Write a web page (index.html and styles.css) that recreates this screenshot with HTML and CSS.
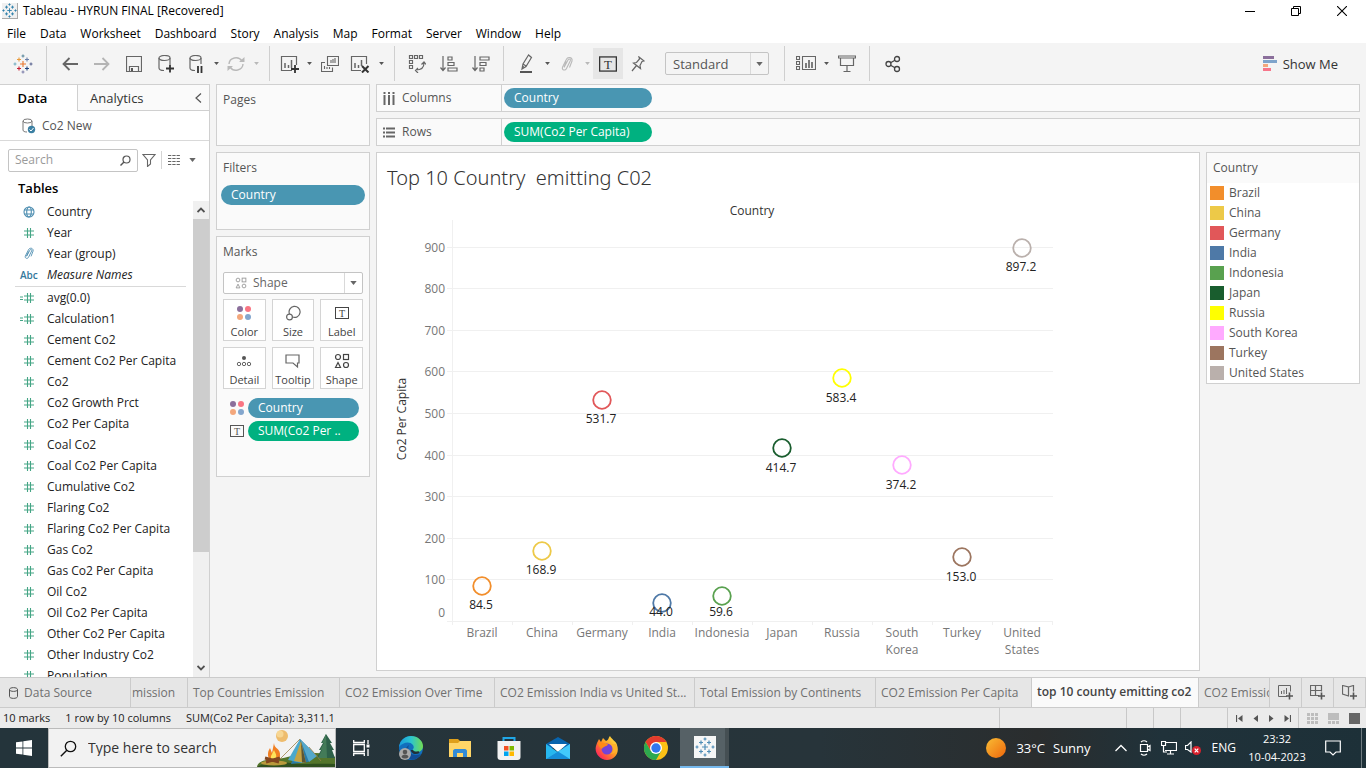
FILE: index.html
```html
<!DOCTYPE html>
<html lang="en">
<head>
<meta charset="utf-8">
<title>Tableau - HYRUN FINAL [Recovered]</title>
<link rel="stylesheet" href="styles.css">
</head>
<body>
<svg class="defs" aria-hidden="true">
  <symbol id="hash" viewBox="0 0 12 12"><path d="M1 4h10M1 8h10M4.500 1v10M7.500 1v10" fill="none" stroke="#45a585" stroke-width="1.100"/></symbol>
  <symbol id="calc" viewBox="0 0 16 12"><path d="M5 4h10M5 8h10M8.500 1v10M11.500 1v10M1 5h3M1 7.500h3" fill="none" stroke="#45a585" stroke-width="1.100"/></symbol>
  <symbol id="clip" viewBox="0 0 14 16"><path d="M4 11.500L8 4c1-1.800 3-.8 2.300.8L6.500 12.500c-1.400 2.700-5 1.500-4-1.400L6.300 3.500c1.500-3.300 6.500-2.300 5.700 1.500L9.500 11.500M6.500 5.500L4 11" fill="none" stroke="currentColor" stroke-width="1.100"/></symbol>
  <symbol id="down" viewBox="0 0 8 5"><path d="M0 0h8L4 5z" fill="currentColor"/></symbol>
  <symbol id="dots" viewBox="0 0 16 16"><circle cx="4" cy="4" r="3" fill="#8b6f9b"/><circle cx="12" cy="4" r="3" fill="#f97583"/><circle cx="4" cy="12" r="3" fill="#f3a77c"/><circle cx="12" cy="12" r="3" fill="#83a6cd"/></symbol>
  <symbol id="tbox" viewBox="0 0 14 14"><rect x=".5" y="1.500" width="13" height="11" fill="none" stroke="currentColor"/><text x="7" y="10.500" class="t-letter">T</text></symbol>
  <symbol id="shapes" viewBox="0 0 16 16"><g fill="none" stroke="currentColor" stroke-width="1.200"><circle cx="4" cy="4" r="2.500"/><rect x="9.500" y="1.500" width="5" height="5"/><path d="M1.500 14.500L4 9.500l2.500 5z"/><circle cx="12" cy="12" r="2.500"/></g></symbol>
  <symbol id="plusmarks" viewBox="0 0 20 20"><path d="M7 10h6M10 7v6M4 5.500h4M6 3.500v4M12 5.500h4M14 3.500v4M4 14.500h4M6 12.500v4M12 14.500h4M14 12.500v4M8.500 2h3M10 .5v3M8.500 18h3M10 16.500v3M.5 10h3M2 8.500v3M16.500 10h3M18 8.500v3" fill="none" stroke="currentColor" stroke-width="1.200"/></symbol>
</svg>

<header class="titlebar">
  <svg class="app-icon" width="16" height="16"><use href="#plusmarks"/></svg>
  <h1>Tableau - HYRUN FINAL [Recovered]</h1>
  <div class="window-buttons">
    <button aria-label="Minimize"><svg width="10" height="10" viewBox="0 0 10 10"><path d="M0 5.500h10" stroke="#000"/></svg></button>
    <button aria-label="Restore"><svg width="10" height="10" viewBox="0 0 10 10"><path d="M.5 2.500h7v7h-7zM2.500 2.500v-2h7v7h-2" fill="none" stroke="#000"/></svg></button>
    <button aria-label="Close"><svg width="10" height="10" viewBox="0 0 10 10"><path d="M0 0l10 10M10 0L0 10" stroke="#000" stroke-width="1.100"/></svg></button>
  </div>
</header>

<nav class="menubar">
  <button>File</button><button>Data</button><button>Worksheet</button><button>Dashboard</button><button>Story</button><button>Analysis</button><button>Map</button><button>Format</button><button>Server</button><button>Window</button><button>Help</button>
</nav>

<div class="toolbar">
  <button class="logo" aria-label="Start page"><svg width="20" height="20" viewBox="0 0 20 20"><g fill="none" stroke-width="1.100"><path d="M7 10h6M10 7v6" stroke="#e8762c"/><path d="M4 5.500h4M6 3.500v4" stroke="#e89b3c"/><path d="M12 5.500h4M14 3.500v4" stroke="#6a7fa8"/><path d="M4 14.500h4M6 12.500v4" stroke="#c72035"/><path d="M12 14.500h4M14 12.500v4" stroke="#1f447e"/><path d="M8.500 2h3M10 .5v3" stroke="#59879b"/><path d="M8.500 18h3M10 16.500v3" stroke="#7e7fab"/><path d="M.5 10h3M2 8.500v3" stroke="#73adc0"/><path d="M16.500 10h3M18 8.500v3" stroke="#5b6591"/></g></svg></button>
  <i class="sep"></i>
  <button class="b32" aria-label="Undo"><svg width="16" height="14" viewBox="0 0 16 14"><path d="M16 7H1.500M7.500 1l-6 6 6 6" fill="none" stroke="#666" stroke-width="1.800"/></svg></button>
  <button class="b32" aria-label="Redo"><svg width="16" height="14" viewBox="0 0 16 14"><path d="M0 7h14.500M8.500 1l6 6-6 6" fill="none" stroke="#b4b4b4" stroke-width="1.800"/></svg></button>
  <button class="b32" aria-label="Save"><svg width="16" height="16" viewBox="0 0 16 16"><path d="M.5.500h15v15H.5zM3.500 15.500v-5h9v5" fill="none" stroke="#666" stroke-width="1.200"/><path d="M5 12h2v3H5z" fill="#555"/></svg></button>
  <button class="b32" aria-label="New data source"><svg width="16" height="18" viewBox="0 0 16 18"><g fill="none" stroke="#666" stroke-width="1.200"><ellipse cx="6.500" cy="3" rx="5.500" ry="2.500"/><path d="M1 3v10c0 1.500 2 2.500 5 2.500M12 3v6"/></g><path d="M8 13.500h8M12 9.500v8" stroke="#333" stroke-width="1.800"/></svg></button>
  <button class="b28" aria-label="Pause auto updates"><svg width="14" height="18" viewBox="0 0 14 18"><g fill="none" stroke="#666" stroke-width="1.200"><ellipse cx="6.500" cy="3" rx="5.500" ry="2.500"/><path d="M1 3v10c0 1.500 2 2.500 5 2.500M12 3v6"/></g><path d="M9 11v7M12.500 11v7" stroke="#333" stroke-width="1.800"/></svg></button>
  <button class="caret" aria-label="Auto update options"><svg width="5" height="3"><use href="#down"/></svg></button>
  <button class="b28 off" aria-label="Run update"><svg width="18" height="16" viewBox="0 0 18 16"><g fill="none" stroke="currentColor" stroke-width="1.400"><path d="M2 8a7 6.500 0 0 1 13-3M16 8a7 6.500 0 0 1-13 3"/></g><path d="M12 6h5.500V1zM6 10H.5v5z" fill="currentColor"/></svg></button>
  <button class="caret off" aria-label="Run update options"><svg width="5" height="3"><use href="#down"/></svg></button>
  <i class="sep"></i>
  <button class="b26" aria-label="New worksheet"><svg width="20" height="18" viewBox="0 0 20 18"><path d="M12 15.500H1.500v-14h15V10" fill="none" stroke="#666" stroke-width="1.200"/><path d="M5 8v5M8.500 10v3M11.500 5v8" stroke="#666" stroke-width="1.500"/><path d="M11 14h8M15 10v8" stroke="#333" stroke-width="1.800"/></svg></button>
  <button class="caret" aria-label="New worksheet options"><svg width="5" height="3"><use href="#down"/></svg></button>
  <button class="b30" aria-label="Duplicate"><svg width="18" height="16" viewBox="0 0 18 16"><path d="M6.500.500h11v9h-11zM4 6.500H.5v9h11v-4M10 7V4M12 7V3M14 7V2M3.500 13v-3M6 13v-2M8.500 13v-2" fill="none" stroke="#666" stroke-width="1.100"/></svg></button>
  <button class="b30" aria-label="Clear sheet"><svg width="20" height="18" viewBox="0 0 20 18"><path d="M11 15.500H1.500v-14h15V9" fill="none" stroke="#666" stroke-width="1.200"/><path d="M5 8v5M8.500 10v3M11.500 5v6" stroke="#666" stroke-width="1.500"/><path d="M12 11l6.500 6.500M18.500 11L12 17.500" stroke="#333" stroke-width="2"/></svg></button>
  <button class="caret" aria-label="Clear options"><svg width="5" height="3"><use href="#down"/></svg></button>
  <i class="sep"></i>
  <button class="b30" aria-label="Swap rows and columns"><svg width="18" height="18" viewBox="0 0 18 18"><path d="M1.500.500h3v3h-3zM6.500.500h3v3h-3zM11.500.500h3v3h-3zM1.500 5.500h3v3h-3zM1.500 10.500h3v3h-3zM16 8c0 5-3 7-8 7M13.500 9.500L16 7l2 2.500M10 13l-2.500 2.500L10 18" fill="none" stroke="#666" stroke-width="1.200"/></svg></button>
  <button class="b34" aria-label="Sort ascending"><svg width="18" height="16" viewBox="0 0 18 16"><path d="M3 0v14M.5 11.500L3 14.500l2.500-3M8 1h4v3H8zM8 6.500h6v3H8zM8 12h9v3H8z" fill="none" stroke="#666" stroke-width="1.200"/></svg></button>
  <button class="b30" aria-label="Sort descending"><svg width="18" height="16" viewBox="0 0 18 16"><path d="M3 0v14M.5 11.500L3 14.500l2.500-3M8 1h9v3H8zM8 6.500h6v3H8zM8 12h4v3H8z" fill="none" stroke="#666" stroke-width="1.200"/></svg></button>
  <i class="sep"></i>
  <button class="b30" aria-label="Highlight"><svg width="14" height="20" viewBox="0 0 14 20"><path d="M9.500 1L4 10l-1 5 4-2.500 5.500-9zM4 10l3 2M3 15l1.500-3" fill="none" stroke="#666" stroke-width="1.200"/><path d="M1 18h12" stroke="#555" stroke-width="2"/></svg></button>
  <button class="caret" aria-label="Highlight options"><svg width="5" height="3"><use href="#down"/></svg></button>
  <button class="b28 off" aria-label="Group members"><svg width="14" height="18"><use href="#clip"/></svg></button>
  <button class="caret off" aria-label="Group options"><svg width="5" height="3"><use href="#down"/></svg></button>
  <button class="b30 pressed" aria-label="Show mark labels"><svg width="18" height="18"><use href="#tbox"/></svg></button>
  <button class="b30" aria-label="Fix axes"><svg width="14" height="16" viewBox="0 0 14 16"><path d="M8 1l5 4-2 .5-2 4 .5 3L2.500 7l3-.5L8.500 3zM5.500 9.500L1 15" fill="none" stroke="#666" stroke-width="1.200"/></svg></button>
  <div class="picker fit"><select aria-label="Fit"><option>Standard</option></select><span class="picker-arrow"><svg width="7" height="4"><use href="#down"/></svg></span></div>
  <i class="sep wide"></i>
  <button class="b28" aria-label="Show or hide cards"><svg width="20" height="15" viewBox="0 0 20 15"><path d="M.5.500h3v3h-3zM.5 5.500h3v3h-3zM.5 10.500h3v3h-3zM6.500.500h13v13h-13z" fill="none" stroke="#666" stroke-width="1.100"/><path d="M10 7v5M13 4v8M16 6v6" stroke="#555" stroke-width="1.500"/></svg></button>
  <button class="caret" aria-label="Card options"><svg width="5" height="3"><use href="#down"/></svg></button>
  <button class="b30" aria-label="Presentation mode"><svg width="18" height="18" viewBox="0 0 18 18"><path d="M.5 1h17v2H.5zM2.500 3.500v7h13v-7M9 11v5M5.500 16.500h7" fill="none" stroke="#666" stroke-width="1.200"/></svg></button>
  <i class="sep"></i>
  <button class="b32" aria-label="Share"><svg width="16" height="18" viewBox="0 0 16 18"><g fill="none" stroke="#444" stroke-width="1.300"><circle cx="3.500" cy="9" r="2.500"/><circle cx="12" cy="4" r="2.500"/><circle cx="12" cy="14" r="2.500"/><path d="M5.500 7.700L10 5.200M5.500 10.300L10 12.800"/></g></svg></button>
  <button class="showme"><svg width="14" height="15" viewBox="0 0 14 15"><path d="M0 0h11v3H0z" fill="#8b6f9b"/><path d="M0 4h14v3H0z" fill="#7fa4cb"/><path d="M0 8h5v3H0z" fill="#f3a77c"/><path d="M0 12h8v3H0z" fill="#f7768a"/></svg>Show Me</button>
</div>

<main class="workspace">
  <aside class="data-pane">
    <div class="pane-tabs">
      <button class="pane-tab current">Data</button>
      <button class="pane-tab">Analytics<svg width="7" height="10" viewBox="0 0 7 10"><path d="M6 .5L1 5l5 4.500" fill="none" stroke="#555" stroke-width="1.200"/></svg></button>
    </div>
    <div class="source"><svg width="14" height="16" viewBox="0 0 14 16"><g fill="none" stroke="#777"><ellipse cx="5.500" cy="3" rx="4.500" ry="2"/><path d="M1 3v9c0 1.300 1.500 2 4 2M10 3v5"/></g><circle cx="9.500" cy="11.500" r="3.700" fill="#3c80a3"/><path d="M7.500 11.500l1.500 1.500 2.500-3" fill="none" stroke="#fff"/></svg>Co2 New</div>
    <div class="finder">
      <label class="search"><input type="text" placeholder="Search" aria-label="Search fields"><svg width="11" height="11" viewBox="0 0 11 11"><circle cx="6.500" cy="4.500" r="3.500" fill="none" stroke="#555" stroke-width="1.200"/><path d="M4 7L.5 10.500" stroke="#555" stroke-width="1.400"/></svg></label>
      <button aria-label="Filter fields"><svg width="14" height="13" viewBox="0 0 14 13"><path d="M1 .5h12L8.500 6v4L5.500 12.500V6z" fill="none" stroke="#666" stroke-width="1.100"/></svg></button>
      <i class="finder-sep"></i>
      <button class="views" aria-label="View options"><svg width="12" height="10" viewBox="0 0 12 10"><path d="M0 .5h12M0 3.500h12M0 6.500h12M0 9.500h12" stroke="#666" stroke-dasharray="3.300 1"/></svg><svg width="7" height="4"><use href="#down"/></svg></button>
    </div>
    <h2>Tables</h2>
    <div class="field-area">
      <ul class="fields">
        <li><svg width="12" height="12" viewBox="0 0 12 12"><g fill="none" stroke="#4d8db0" stroke-width="1.100"><circle cx="6" cy="6" r="5"/><ellipse cx="6" cy="6" rx="2.300" ry="5"/><path d="M1.500 4h9M1.500 8h9"/></g></svg>Country</li>
        <li><svg width="12" height="12"><use href="#hash"/></svg>Year</li>
        <li><svg class="dim" width="12" height="13"><use href="#clip"/></svg>Year (group)</li>
        <li class="names"><b>Abc</b><em>Measure Names</em></li>
        <li><svg class="wide-icon" width="16" height="12"><use href="#calc"/></svg>avg(0.0)</li>
        <li><svg class="wide-icon" width="16" height="12"><use href="#calc"/></svg>Calculation1</li>
        <li><svg width="12" height="12"><use href="#hash"/></svg>Cement Co2</li>
        <li><svg width="12" height="12"><use href="#hash"/></svg>Cement Co2 Per Capita</li>
        <li><svg width="12" height="12"><use href="#hash"/></svg>Co2</li>
        <li><svg width="12" height="12"><use href="#hash"/></svg>Co2 Growth Prct</li>
        <li><svg width="12" height="12"><use href="#hash"/></svg>Co2 Per Capita</li>
        <li><svg width="12" height="12"><use href="#hash"/></svg>Coal Co2</li>
        <li><svg width="12" height="12"><use href="#hash"/></svg>Coal Co2 Per Capita</li>
        <li><svg width="12" height="12"><use href="#hash"/></svg>Cumulative Co2</li>
        <li><svg width="12" height="12"><use href="#hash"/></svg>Flaring Co2</li>
        <li><svg width="12" height="12"><use href="#hash"/></svg>Flaring Co2 Per Capita</li>
        <li><svg width="12" height="12"><use href="#hash"/></svg>Gas Co2</li>
        <li><svg width="12" height="12"><use href="#hash"/></svg>Gas Co2 Per Capita</li>
        <li><svg width="12" height="12"><use href="#hash"/></svg>Oil Co2</li>
        <li><svg width="12" height="12"><use href="#hash"/></svg>Oil Co2 Per Capita</li>
        <li><svg width="12" height="12"><use href="#hash"/></svg>Other Co2 Per Capita</li>
        <li><svg width="12" height="12"><use href="#hash"/></svg>Other Industry Co2</li>
        <li><svg width="12" height="12"><use href="#hash"/></svg>Population</li>
      </ul>
      <div class="scrollbar"><span><svg width="8" height="6" viewBox="0 0 8 6"><path d="M.5 5L4 1.500 7.500 5" fill="none" stroke="#505050" stroke-width="1.800"/></svg></span><i></i><span class="low"><svg width="8" height="6" viewBox="0 0 8 6"><path d="M.5 1L4 4.500 7.500 1" fill="none" stroke="#505050" stroke-width="1.800"/></svg></span></div>
    </div>
  </aside>

  <div class="cards">
    <section class="card pages"><h3>Pages</h3></section>
    <section class="card filters"><h3>Filters</h3><div class="pill blue">Country</div></section>
    <section class="card marks">
      <h3>Marks</h3>
      <div class="picker mark-type"><svg width="12" height="12"><use href="#shapes"/></svg><select aria-label="Mark type"><option>Shape</option></select><span class="picker-arrow"><svg width="7" height="4"><use href="#down"/></svg></span></div>
      <div class="mark-buttons">
        <button><svg width="16" height="16"><use href="#dots"/></svg>Color</button>
        <button><svg width="16" height="16" viewBox="0 0 16 16"><g fill="none" stroke="#666" stroke-width="1.200"><path d="M4.500 9A5.500 5.500 0 1 1 7.500 12"/><circle cx="4.500" cy="12" r="2.900"/></g></svg>Size</button>
        <button><svg width="14" height="16"><use href="#tbox"/></svg>Label</button>
        <button><svg width="16" height="16" viewBox="0 0 16 16"><circle cx="8" cy="5" r="2" fill="#555"/><g fill="none" stroke="#666"><circle cx="3" cy="11" r="1.700"/><circle cx="8" cy="11" r="1.700"/><circle cx="13" cy="11" r="1.700"/></g></svg>Detail</button>
        <button><svg width="16" height="16" viewBox="0 0 16 16"><path d="M1 2h13v8h-1.500v4L8 10H1z" fill="none" stroke="#666" stroke-width="1.200"/></svg>Tooltip</button>
        <button><svg width="16" height="16"><use href="#shapes"/></svg>Shape</button>
      </div>
      <div class="mark-pills">
        <div><svg width="16" height="16"><use href="#dots"/></svg><span class="pill blue">Country</span></div>
        <div><svg width="14" height="14"><use href="#tbox"/></svg><span class="pill green">SUM(Co2 Per ..</span></div>
      </div>
    </section>
  </div>

  <div class="stage">
    <div class="shelf"><h3><svg width="12" height="13" viewBox="0 0 12 13"><path d="M1.500 0v2M6 0v2M10.500 0v2M1.500 3v10M6 3v10M10.500 3v10" stroke="#666" stroke-width="2"/></svg>Columns</h3><span class="pill blue">Country</span></div>
    <div class="shelf"><h3><svg width="12" height="11" viewBox="0 0 12 11"><path d="M0 1.500h2M0 5.500h2M0 9.500h2M3 1.500h9M3 5.500h9M3 9.500h9" stroke="#666" stroke-width="2"/></svg>Rows</h3><span class="pill green">SUM(Co2 Per Capita)</span></div>
    <div class="sheet">
      <section class="view">
        <h2>Top 10 Country&nbsp; emitting C02</h2>
        <svg class="chart" width="700" height="464" viewBox="0 0 700 464" role="img" aria-label="Co2 per capita by country">
          <text class="axis-title" x="375" y="15">Country</text>
          <text class="axis-title" transform="translate(29 219) rotate(-90)">Co2 Per Capita</text>
          <path class="grid" d="M70 47.500h606M70 88.500h606M70 130.500h606M70 171.500h606M70 213.500h606M70 255.500h606M70 296.500h606M70 338.500h606M70 379.500h606M70 421.500h606M75.500 20v405M135.500 421v4M195.500 421v4M255.500 421v4M315.500 421v4M375.500 421v4M435.500 421v4M495.500 421v4M555.500 421v4M615.500 421v4M675.500 421v4"/>
          <g class="ticks">
            <text x="68" y="52">900</text><text x="68" y="93">800</text><text x="68" y="135">700</text><text x="68" y="176">600</text><text x="68" y="218">500</text><text x="68" y="260">400</text><text x="68" y="301">300</text><text x="68" y="343">200</text><text x="68" y="384">100</text><text x="68" y="417">0</text>
          </g>
          <g class="names">
            <text x="105" y="437">Brazil</text><text x="165" y="437">China</text><text x="225" y="437">Germany</text><text x="285" y="437">India</text><text x="345" y="437">Indonesia</text><text x="405" y="437">Japan</text><text x="465" y="437">Russia</text><text x="525" y="437">South</text><text x="525" y="454">Korea</text><text x="585" y="437">Turkey</text><text x="645" y="437">United</text><text x="645" y="454">States</text>
          </g>
          <g class="rings">
            <circle cx="105" cy="386" r="8.800" stroke="#f28e2b"/><circle cx="165" cy="351" r="8.800" stroke="#edc948"/><circle cx="225" cy="200" r="8.800" stroke="#e15759"/><circle cx="285" cy="403" r="8.800" stroke="#4e79a7"/><circle cx="345" cy="396" r="8.800" stroke="#59a14f"/><circle cx="405" cy="248" r="8.800" stroke="#195d2e"/><circle cx="465" cy="178" r="8.800" stroke="#ffff00"/><circle cx="525" cy="265" r="8.800" stroke="#ffaaff"/><circle cx="585" cy="357" r="8.800" stroke="#9c755f"/><circle cx="645" cy="48" r="8.800" stroke="#bab0ac"/>
          </g>
          <g class="values">
            <text x="104" y="409">84.5</text><text x="164" y="374">168.9</text><text x="224" y="223">531.7</text><text x="284" y="416">44.0</text><text x="344" y="416">59.6</text><text x="404" y="272">414.7</text><text x="464" y="202">583.4</text><text x="524" y="289">374.2</text><text x="584" y="381">153.0</text><text x="644" y="71">897.2</text>
          </g>
        </svg>
      </section>
      <section class="legend">
        <h3>Country</h3>
        <ul>
          <li><i class="brazil"></i>Brazil</li><li><i class="china"></i>China</li><li><i class="germany"></i>Germany</li><li><i class="india"></i>India</li><li><i class="indonesia"></i>Indonesia</li><li><i class="japan"></i>Japan</li><li><i class="russia"></i>Russia</li><li><i class="korea"></i>South Korea</li><li><i class="turkey"></i>Turkey</li><li><i class="usa"></i>United States</li>
        </ul>
      </section>
    </div>
  </div>
</main>

<nav class="sheet-tabs">
  <button class="tab datasource"><svg width="9" height="12" viewBox="0 0 9 12"><path d="M.5 2.500v7c0 2.500 8 2.500 8 0v-7c0-2.500-8-2.500-8 0s8 2.500 8 0" fill="none" stroke="#555"/></svg>Data Source</button>
  <button class="tab cut-left">mission</button>
  <button class="tab w152">Top Countries Emission</button>
  <button class="tab w155">CO2 Emission Over Time</button>
  <button class="tab w200">CO2 Emission India vs United St...</button>
  <button class="tab w181">Total Emission by Continents</button>
  <button class="tab w156">CO2 Emission Per Capita</button>
  <button class="tab active">top 10 county emitting co2</button>
  <button class="tab last">CO2 Emission</button>
  <button class="tab add" aria-label="New worksheet"><svg width="16" height="15" viewBox="0 0 16 15"><path d="M9 11.500H.5V.500h12v6M3.500 9V6M6 9V5M8.500 9V3" fill="none" stroke="#666"/><path d="M8 11h7M11.500 7.500v7" stroke="#555" stroke-width="1.600"/></svg></button>
  <button class="tab add" aria-label="New dashboard"><svg width="16" height="15" viewBox="0 0 16 15"><path d="M9 10.500H.5V.500h11v6M.5 5.500h11M5.500 0v10" fill="none" stroke="#666" stroke-width="1.200"/><path d="M8 11h7M11.500 7.500v7" stroke="#555" stroke-width="1.600"/></svg></button>
  <button class="tab add" aria-label="New story"><svg width="16" height="15" viewBox="0 0 16 15"><path d="M6.500 11L.5 9V.500l6 1.500zM6.500 2l5-1.500v6" fill="none" stroke="#666" stroke-width="1.200"/><path d="M8 11h7M11.500 7.500v7" stroke="#555" stroke-width="1.600"/></svg></button>
</nav>

<footer class="status">
  <span>10 marks</span><span>1 row by 10 columns</span><span>SUM(Co2 Per Capita): 3,311.1</span>
  <div class="status-cells"><i class="s127"></i><i class="s27"></i><i class="s27"></i><i class="s47"></i></div>
  <div class="pager">
    <button aria-label="First sheet"><svg width="7" height="7" viewBox="0 0 7 7"><path d="M.5 0v7" stroke="#555" stroke-width="1.200"/><path d="M6.500 0v7L2 3.500z" fill="#555"/></svg></button>
    <button aria-label="Previous sheet"><svg width="7" height="7" viewBox="0 0 7 7"><path d="M6 0v7L1.500 3.500z" fill="#555"/></svg></button>
    <button aria-label="Next sheet"><svg width="7" height="7" viewBox="0 0 7 7"><path d="M1 0v7l4.500-3.500z" fill="#555"/></svg></button>
    <button aria-label="Last sheet"><svg width="7" height="7" viewBox="0 0 7 7"><path d="M6.500 0v7" stroke="#555" stroke-width="1.200"/><path d="M.5 0v7L5 3.500z" fill="#555"/></svg></button>
  </div>
  <div class="layouts">
    <button aria-label="Sheet sorter"><svg width="11" height="11" viewBox="0 0 11 11"><path d="M0 1.500h11M0 5.500h11M0 9.500h11" stroke="#bdbdbd" stroke-width="3" stroke-dasharray="3 1"/></svg></button>
    <button aria-label="Filmstrip"><svg width="11" height="11" viewBox="0 0 11 11"><path d="M0 3.500h11" stroke="#bdbdbd" stroke-width="7"/><path d="M0 9.500h11" stroke="#bdbdbd" stroke-width="3" stroke-dasharray="3 1"/></svg></button>
    <button aria-label="Tabs"><svg width="11" height="11"><rect width="11" height="11" fill="#666"/></svg></button>
  </div>
</footer>

<div class="taskbar">
  <button class="start" aria-label="Start"><svg width="16" height="16" viewBox="0 0 16 16"><path d="M0 2.300L6.500 1.400v6.200H0zM7.300 1.300L16 0v7.600H7.300zM0 8.400h6.500v6.200L0 13.700zM7.300 8.400H16V16l-8.700-1.300z" fill="#fff"/></svg></button>
  <label class="taskbar-search">
    <svg width="17" height="17" viewBox="0 0 17 17"><circle cx="10.500" cy="6.500" r="5.200" fill="none" stroke="#111" stroke-width="1.300"/><path d="M6.800 10.200L.8 16.200" stroke="#111" stroke-width="1.400"/></svg>
    <input type="text" placeholder="Type here to search" aria-label="Type here to search">
    <svg class="camp" width="78" height="38" viewBox="0 0 78 38">
      <path d="M0 38c1-7 10-7 20-8s20-6 34-6 20 2 24 4v10z" fill="#54752b"/><path d="M0 38c5-4 22-6 34-4s24 0 44 1v3z" fill="#2f501f"/><ellipse cx="17" cy="34" rx="13" ry="2.500" fill="#b99a3c"/>
      <circle cx="25" cy="7" r="6" fill="#eebc6d"/><circle cx="23" cy="5" r="3.500" fill="#f7d693"/>
      <path d="M69 5l6 9h-2l4 7h-2l3 8H60l4-8h-2l4-7h-2z" fill="#2e6049"/><path d="M69 5l1 24H61l4-8h-2l4-7h-2z" fill="#437b58"/>
      <path d="M43 10L60 27 51 33 34 35z" fill="#2b7ba5"/><path d="M43 10L31 31l14 3z" fill="#4ba8cc"/><path d="M43 10l17 17-8 6-9-23z" fill="#55a8ca"/><path d="M44 12l-7 20 12 2z" fill="#c5a343"/><path d="M44 13l1 20 4 1z" fill="#5c5634"/><path d="M43 10L23 30M52 18l12 14" stroke="#9b8048" stroke-width=".8"/>
      <path d="M17 14c0 6 7 5 6 13-1 6-12 6-12-1 0-4 1-5 2-7l2 5z" fill="#f17f22"/><path d="M17 21c1 3 3 4 2 8-2 3-6 2-5-2z" fill="#ffe35b"/><path d="M8 29l14 4M23 29L9 33" stroke="#824620" stroke-width="3"/>
    </svg>
  </label>
  <button class="app taskview" aria-label="Task view"><svg width="17" height="16" viewBox="0 0 17 16"><path d="M.7 0v2.500h10.600V0M.7 16v-2.500h10.600V16M.7 4.500h10.600v7H.7zM15 0v4M15 9v7" fill="none" stroke="#fff" stroke-width="1.300"/><path d="M13.500 4.500h3v3h-3z" fill="#fff"/></svg></button>
  <button class="app" aria-label="Microsoft Edge"><svg width="24" height="24" viewBox="0 0 24 24"><defs><linearGradient id="edge-a"><stop stop-color="#199bdd"/><stop offset=".5" stop-color="#2cc5ce"/><stop offset="1" stop-color="#72dc52"/></linearGradient></defs><circle cx="12" cy="12" r="12" fill="#126fbd"/><path d="M0 11C1 4 6 0 12 0c7 0 12 5 12 10 0 4-3 6-6 6-4 0-5-1-4-3 1-1 1-2 0-4C11 5 4 6 0 11z" fill="url(#edge-a)"/><path d="M10 9c-3 7 3 12 12 9-3 5-8 7-12 5C4 20 5 12 10 9z" fill="#114d95"/><path d="M13 14c0 2 3 4 7 2" stroke="#21313a" stroke-width="2.500" fill="none"/><circle cx="6" cy="18" r="6" fill="#aaa"/><circle cx="6" cy="16" r="2.300" fill="#555"/><path d="M2.500 21c0-3.500 7-3.500 7 0-2 2-5 2-7 0z" fill="#555"/></svg></button>
  <button class="app" aria-label="File Explorer"><svg width="22" height="18" viewBox="0 0 22 18"><path d="M0 0h9l2 2h11v5H0z" fill="#dfa01b"/><path d="M0 4l9 0 2-2h11v16H0z" fill="#ffd567"/><path d="M4 18v-6c0-1 1-2 2-2h10c1 0 2 1 2 2v6h-4v-4H8v4z" fill="#318ad6"/></svg></button>
  <button class="app" aria-label="Microsoft Store"><svg width="24" height="24" viewBox="0 0 24 24"><path d="M6.500 7V2h11v5" fill="none" stroke="#20a7e7" stroke-width="2"/><path d="M.5 5h23v16c0 2-1 3-3 3h-17c-2 0-3-1-3-3z" fill="#f2f2f2"/><path d="M7 10h4.500v4.500H7z" fill="#f25022"/><path d="M12.500 10H17v4.500h-4.500z" fill="#7fba00"/><path d="M7 15.500h4.500V20H7z" fill="#00a4ef"/><path d="M12.500 15.500H17V20h-4.500z" fill="#ffb900"/></svg></button>
  <button class="app" aria-label="Mail"><svg width="24" height="22" viewBox="0 0 24 22"><path d="M0 7l12-7 12 7v4H0z" fill="#0864ad"/><path d="M3 7h18l-9 8z" fill="#fff"/><path d="M0 7l13 9 11-9v15H0z" fill="#27b7ef"/><path d="M0 22L24 7v15z" fill="#42c9fa"/><path d="M0 22l12-7.500L24 22z" fill="#168ed9"/></svg></button>
  <button class="app" aria-label="Firefox"><svg width="24" height="24" viewBox="0 0 24 24"><defs><linearGradient id="fox" x1="1" x2="0" y1="0" y2="1"><stop stop-color="#fff44f"/><stop offset=".45" stop-color="#ff9b22"/><stop offset=".8" stop-color="#ff3750"/><stop offset="1" stop-color="#e21586"/></linearGradient></defs><path d="M2 7l2-4 2 3 2-4 3 3c3-1 2-3 4-5 1 3 6 5 7 9 3 9-3 15-10 15S-1 17 1 10z" fill="url(#fox)"/><circle cx="12" cy="13" r="5.500" fill="#7443d7"/><path d="M3 7c4-2 6 1 10 1-1 3-5 2-6 5-2-1-4-3-4-6z" fill="#ff8a16"/><path d="M13 8c7-1 8 8 2 10 5 0 9-4 6-10" fill="#ffb12b"/></svg></button>
  <button class="app" aria-label="Google Chrome"><svg width="24" height="24" viewBox="0 0 24 24"><circle cx="12" cy="12" r="12" fill="#fbc116"/><path d="M12 6h10.400A12 12 0 0 0 1.600 6l5.200 9z" fill="#e33b2e"/><path d="M1.600 6A12 12 0 0 0 12 24l5.200-9-10.400 0z" fill="#2da94f"/><circle cx="12" cy="12" r="6" fill="#fff"/><circle cx="12" cy="12" r="4.700" fill="#3177ef"/></svg></button>
  <button class="app running" aria-label="Tableau"><svg width="22" height="22" viewBox="-1 -1 22 22"><rect x="-1" y="-1" width="22" height="22" fill="#f6f6f6"/><use href="#plusmarks" width="20" height="20"/></svg></button>
  <div class="tray">
    <svg class="sun" width="20" height="20" viewBox="0 0 20 20"><defs><linearGradient id="sun" x2="1" y2="1"><stop stop-color="#f9bd35"/><stop offset="1" stop-color="#ef660b"/></linearGradient></defs><circle cx="10" cy="10" r="10" fill="url(#sun)"/></svg>
    <span class="weather">33°C</span><span class="weather sunny">Sunny</span>
    <button aria-label="Hidden icons"><svg width="12" height="8" viewBox="0 0 12 8"><path d="M.5 7L6 1.500 11.500 7" fill="none" stroke="#fff" stroke-width="1.300"/></svg></button>
    <button aria-label="Meet now"><svg width="12" height="16" viewBox="0 0 12 16"><path d="M1.500 4.500h7v7h-7zM8.500 7l2.500-1.500v5L8.500 9M2 2q3-2.500 6 0M2 14q3 2.500 6 0" fill="none" stroke="#fff" stroke-width="1.200"/></svg></button>
    <button aria-label="Network"><svg width="16" height="14" viewBox="0 0 16 14"><path d="M4.500 1.500h11v8H4M9.500 10v3M6 13h7M.5.500h4v4h-4zM2.500 5v6H6" fill="none" stroke="#fff" stroke-width="1.200"/></svg></button>
    <button aria-label="Volume muted"><svg width="16" height="14" viewBox="0 0 16 14"><path d="M.5 4.500h2L6 1v10L2.500 8.500h-2z" fill="none" stroke="#fff" stroke-width="1.200"/><circle cx="11.500" cy="9.500" r="4.500" fill="#d9212c"/><path d="M9.700 7.700l3.600 3.600M13.300 7.700l-3.600 3.600" stroke="#fff" stroke-width="1.200"/></svg></button>
    <span class="lang">ENG</span>
    <time>23:32<br>10-04-2023</time>
    <button class="notes" aria-label="Notifications"><svg width="16" height="16" viewBox="0 0 16 16"><path d="M.7 1h14.600v11H11l-3 3-3-3H.7z" fill="none" stroke="#fff" stroke-width="1.200"/></svg></button>
    <i class="desktop-edge"></i>
  </div>
</div>
</body>
</html>
```
FILE: styles.css
```css
* { box-sizing: border-box; }
body {
  margin: 0;
  height: 100vh;
  display: flex;
  flex-direction: column;
  overflow: hidden;
  background: #f4f4f4;
  color: #333;
  font: 12px/16px "Open Sans", "Noto Sans", sans-serif;
}
button, input, select { font: inherit; color: inherit; }
button { border: 0; padding: 0; background: none; }
h1, h2, h3, ul { margin: 0; padding: 0; font: inherit; list-style: none; }
svg { display: block; flex: none; }
.defs { display: none; }
.t-letter { font: 10px "Liberation Serif", serif; text-anchor: middle; fill: currentColor; }

.titlebar { flex: none; height: 22px; display: flex; align-items: center; gap: 5px; padding-left: 2px; background: #fff; color: #000; }
.app-icon { color: #2d7faa; border-right: 1px solid #aaa; border-bottom: 1px solid #aaa; background: #f0f0f0; }
.window-buttons { margin-left: auto; display: flex; height: 100%; }
.window-buttons button { width: 46px; display: grid; place-items: center; }
.window-buttons button:last-child { width: 47px; padding-right: 1px; }

.menubar { flex: none; height: 21px; display: flex; align-items: center; gap: 14px; padding: 2px 7px 0; background: #fff; color: #000; }

.toolbar { flex: none; height: 41px; display: flex; align-items: center; color: #555; }
.toolbar button { height: 31px; display: flex; align-items: center; justify-content: center; flex: none; }
.toolbar .logo { width: 39px; padding-left: 6px; }
.b26 { width: 26px; }
.b28 { width: 28px; }
.b30 { width: 30px; }
.b32 { width: 32px; }
.b34 { width: 34px; }
.caret { width: 12px; }
.off { color: #b9b9b9; }
.pressed { background: #e6e6e6; color: #333; }
.sep { flex: none; width: 1px; height: 35px; margin: 0 7px; background: #cfcfcf; }
.sep.wide { margin-left: 15px; }
.toolbar .showme { margin-left: auto; margin-right: 28px; gap: 6px; font-size: 13px; color: #333; }

.picker { display: flex; align-items: center; border: 1px solid #c4c4c4; border-radius: 2px; }
.picker select { appearance: none; flex: 1; min-width: 0; border: 0; padding: 0; background: none; outline: 0; }
.picker-arrow { display: grid; place-items: center; align-self: stretch; width: 18px; border-left: 1px solid #d9d9d9; color: #666; pointer-events: none; }
.fit { width: 104px; height: 23px; margin-left: 12px; padding-left: 7px; font-size: 13px; }

.workspace { flex: 1; min-height: 0; display: flex; }
.data-pane { width: 210px; flex: none; display: flex; flex-direction: column; border: solid #d0d0d0; border-width: 1px 1px 0 0; background: #fff; }
.pane-tabs { display: flex; height: 26px; flex: none; font-size: 13px; }
.pane-tab.current { width: 77px; padding-right: 12px; font-weight: 600; color: #000; }
.pane-tab:not(.current) { flex: 1; display: flex; align-items: center; justify-content: space-between; padding: 0 7px 0 12px; border: solid #d0d0d0; border-width: 0 0 1px 1px; background: #fafafa; }
.source { display: flex; align-items: center; gap: 6px; height: 30px; flex: none; padding-left: 22px; border-bottom: 1px solid #d9d9d9; color: #555; }
.finder { display: flex; align-items: center; height: 38px; flex: none; padding-left: 8px; }
.search { display: flex; align-items: center; width: 130px; height: 23px; padding: 0 6px; border: 1px solid #c4c4c4; border-radius: 2px; }
.search input { flex: 1; min-width: 0; border: 0; padding: 0; outline: 0; background: none; }
.search input::placeholder { color: #9a9a9a; opacity: 1; }
.finder button { padding-left: 4px; }
.finder-sep { width: 1px; height: 18px; margin: 0 2px 0 5px; background: #d4d4d4; }
.finder .views { display: flex; align-items: center; gap: 9px; color: #666; }
.data-pane h2 { flex: none; height: 22px; padding-left: 18px; line-height: 18px; font-size: 13px; font-weight: 600; color: #000; }
.field-area { flex: 1; min-height: 0; display: flex; overflow: hidden; }
.fields { flex: 1; }
.fields li { display: flex; align-items: center; height: 21px; padding-left: 47px; white-space: nowrap; color: #222; }
.fields svg { margin: 0 12px 0 -24px; }
.fields .wide-icon { margin-left: -28px; }
.fields .dim { color: #4d8db0; }
.fields .names { height: 23px; padding-bottom: 2px; background: linear-gradient(#d9d9d9, #d9d9d9) 15px 22px / 171px 1px no-repeat; }
.names b { width: 27px; margin-left: -27px; font-size: 10px; font-weight: 600; color: #35799c; }
.scrollbar { width: 16px; display: flex; flex-direction: column; background: #f0f0f0; }
.scrollbar span { display: grid; place-items: center; height: 18px; flex: none; }
.scrollbar i { flex: 0 0 70%; background: #cdcdcd; }
.scrollbar .low { margin-top: auto; }

.cards { width: 154px; flex: none; margin-left: 6px; display: flex; flex-direction: column; gap: 6px; }
.card { border: 1px solid #d0d0d0; background: #fafafa; padding: 7px 6px 0; color: #555; }
.pages { height: 62px; }
.filters { height: 78px; padding: 7px 4px 0; }
.filters h3 { padding: 0 2px 9px; }
.marks { padding-bottom: 35px; }
.pill { display: block; height: 20px; padding: 0 10px; border-radius: 10px; line-height: 19px; color: #fff; font-weight: 500; white-space: nowrap; overflow: hidden; }
.blue { background: #4996b2; }
.green { background: #00b180; }
.mark-type { height: 22px; margin-top: 12px; padding-left: 11px; background: #fff; color: #666; }
.mark-type > svg { color: #999; margin-right: 6px; }
.mark-buttons { display: grid; grid-template-columns: repeat(3, 1fr); gap: 6px; margin-top: 5px; font-size: 11px; }
.mark-buttons button { display: flex; flex-direction: column; align-items: center; gap: 3px; height: 42px; padding-top: 5px; border: 1px solid #d4d4d4; background: #fff; color: #444; }
.mark-pills { display: grid; gap: 3px; margin-top: 9px; }
.mark-pills div { display: grid; grid-template-columns: 25px 1fr; align-items: center; justify-items: center; padding-right: 4px; }
.mark-pills svg { margin-left: 2px; }
.mark-pills .pill { width: 100%; }

.stage { flex: 1; min-width: 0; margin: 0 6px; display: flex; flex-direction: column; gap: 6px; }
.shelf { display: flex; align-items: center; height: 28px; flex: none; border: 1px solid #d0d0d0; background: #fafafa; color: #555; }
.shelf h3 { display: flex; align-items: center; gap: 7px; width: 125px; height: 100%; padding-left: 6px; border-right: 1px solid #d0d0d0; }
.shelf .pill { width: 148px; margin-left: 2px; }
.sheet { flex: 1; min-height: 0; display: flex; gap: 6px; align-items: flex-start; }
.view { flex: 1; min-width: 0; align-self: stretch; margin-bottom: 6px; border: 1px solid #d0d0d0; background: #fff; overflow: hidden; }
.view h2 { height: 47px; padding: 10px 10px 0; line-height: 30px; font-family: "Noto Sans", "Open Sans", sans-serif; font-size: 20px; font-weight: 300; color: #333; }
.chart text { font-size: 12px; }
.chart .axis-title { text-anchor: middle; fill: #333; font-weight: 500; }
.grid { fill: none; stroke: #f0f0f0; }
.ticks text { text-anchor: end; fill: #777; }
.chart .names text { text-anchor: middle; fill: #777; }
.rings { fill: none; stroke-width: 1.800; }
.values text { text-anchor: middle; fill: #222; }

.legend { width: 154px; flex: none; border: 1px solid #d0d0d0; background: #fff; }
.legend h3 { height: 30px; padding: 7px 6px 0; background: #fafafa; color: #555; }
.legend li { display: flex; align-items: center; gap: 5px; height: 20px; padding-left: 3px; color: #555; }
.legend i { width: 14px; height: 14px; }
.brazil { background: #f28e2b; }
.china { background: #edc948; }
.germany { background: #e15759; }
.india { background: #4e79a7; }
.indonesia { background: #59a14f; }
.japan { background: #195d2e; }
.russia { background: #ffff00; }
.korea { background: #ffaaff; }
.turkey { background: #9c755f; }
.usa { background: #bab0ac; }

.sheet-tabs { flex: none; display: flex; height: 31px; border: solid #cbcbcb; border-width: 1px 0; background: #e6e6e6; color: #707070; }
.tab { flex: none; padding: 0 0 0 5px; border-right: 1px solid #cbcbcb; text-align: left; white-space: nowrap; overflow: hidden; }
.datasource { width: 131px; display: flex; align-items: center; gap: 6px; padding-left: 9px; }
.cut-left { width: 57px; padding-left: 1px; }
.w152 { width: 152px; }
.w155 { width: 155px; }
.w200 { width: 200px; }
.w181 { width: 181px; }
.w156 { width: 156px; }
.active { width: 167px; padding-bottom: 2px; background: #fafafa; color: #444; font-weight: 600; }
.last { flex: 1 1 0; min-width: 0; }
.add { width: 32px; display: grid; place-items: center; padding: 0; }

.status { flex: none; display: flex; align-items: center; gap: 15px; height: 20px; padding-left: 3px; background: #ebebeb; color: #222; font-size: 11px; white-space: nowrap; }
.status-cells { display: flex; height: 100%; margin-left: auto; }
.status-cells i { border-left: 1px solid #c8c8c8; }
.s127 { width: 127px; }
.s27 { width: 27px; }
.s47 { width: 47px; }
.pager, .layouts { display: flex; align-items: center; height: 100%; border-left: 1px solid #c8c8c8; margin-left: -15px; }
.pager { width: 71px; padding-left: 8px; gap: 9px; }
.layouts { width: 68px; padding-left: 8px; gap: 10px; }

.taskbar { flex: none; display: flex; height: 40px; background: linear-gradient(90deg, #24343b, #27343a 60%, #2a2d2e 76%, #20323a 85%, #1d3038); color: #fff; }
.start { width: 48px; display: grid; place-items: center; }
.taskbar-search { display: flex; align-items: center; width: 288px; padding-left: 11px; border: 1px solid #bbb; background: #f2f2f2; color: #333; }
.taskbar-search input { flex: 1; min-width: 0; margin-left: 11px; padding: 0; border: 0; outline: 0; background: none; font-size: 14px; }
.taskbar-search input::placeholder { color: #333; opacity: 1; }
.app { width: 49px; display: grid; place-items: center; }
.taskview { width: 50px; }
.running { background: #566166; border-bottom: 2px solid #76b9ed; box-shadow: inset -4px 0 #454f53; color: #4f8db6; }
.tray { flex: 1; display: flex; align-items: center; justify-content: flex-end; white-space: nowrap; }
.weather { margin-left: 10px; font-size: 13px; }
.sunny { margin-left: 8px; }
.tray button { width: 24px; display: grid; place-items: center; }
.sunny + button { margin-left: 18px; }
.lang { margin-left: 7px; }
.tray time { width: 74px; margin-left: 4px; text-align: center; line-height: 18px; font-size: 11px; }
.tray .notes { width: 38px; }
.desktop-edge { width: 1px; height: 100%; margin: 0 4px 0 9px; background: #6f7b80; }
```
